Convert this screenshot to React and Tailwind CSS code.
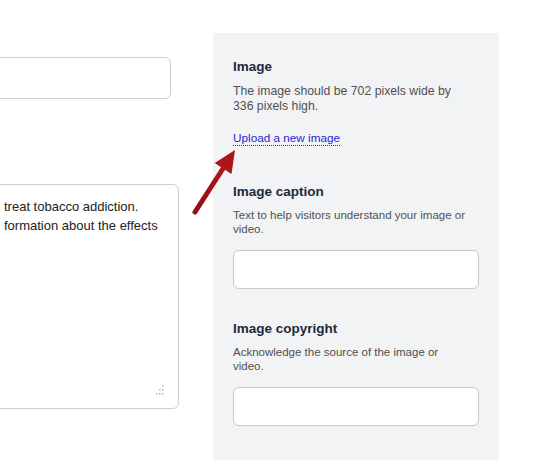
import React from 'react'

const font = { fontFamily: '"Liberation Sans", Arial, sans-serif' }

function Field({ title, help, className = '' }) {
  return (
    <div className={className}>
      <h3 className="text-[13.5px] leading-[16px] font-bold text-[#1c2a3a]">{title}</h3>
      <p className="mt-[8px] text-[11.5px] leading-[14px] text-[#505050] whitespace-nowrap">{help}</p>
      <input
        type="text"
        className="mt-[14px] block w-[246px] h-[39px] bg-white border border-[#c8c8c8] rounded-[6px] outline-none"
      />
    </div>
  )
}

function ResizeGrip() {
  return (
    <svg width="12" height="12" viewBox="0 0 12 12" className="absolute right-[13px] bottom-[12px]">
      {[[9, 1], [6, 5], [9, 5], [3, 9], [6, 9], [9, 9]].map(([x, y], i) => (
        <rect key={i} x={x} y={y} width="1.5" height="1.5" fill="#b8b8b8" />
      ))}
    </svg>
  )
}

export default function App() {
  return (
    <div className="relative w-[560px] h-[460px] overflow-hidden bg-white flex" style={font}>
      {/* Main column (cropped on the left) */}
      <div className="w-[213px] shrink-0">
        <input
          type="text"
          className="block mt-[57px] -ml-[10px] w-[181px] h-[42px] bg-white border border-[#cfcfcf] rounded-[6px] outline-none"
        />
        <div className="relative mt-[85px] -ml-[10px] w-[189px] h-[225px] bg-white border border-[#cfcfcf] rounded-[6px]">
          <div className="pt-[12px] pl-[13px] text-[13px] leading-[19px] text-[#222] whitespace-nowrap">
            <div>treat tobacco addiction.</div>
            <div>formation about the effects</div>
          </div>
          <ResizeGrip />
        </div>
      </div>

      {/* Sidebar */}
      <div className="mt-[33px] w-[286px] shrink-0 bg-[#f2f3f5] px-5 pt-[26px]">
        <h3 className="text-[13.5px] leading-[16px] font-bold text-[#1c2a3a]">Image</h3>
        <p className="mt-[9px] text-[12.25px] leading-[15px] text-[#505050] whitespace-nowrap">
          The image should be 702 pixels wide by
          <br />
          336 pixels high.
        </p>
        <a
          href="#"
          className="inline-block mt-[17px] text-[11.75px] leading-[14px] text-[#2828d8] border-b border-dotted border-[#2828d8]"
        >
          Upload a new image
        </a>
        <Field
          className="mt-[35px]"
          title="Image caption"
          help={<>Text to help visitors understand your image or<br />video.</>}
        />
        <Field
          className="mt-[32px]"
          title="Image copyright"
          help={<>Acknowledge the source of the image or<br />video.</>}
        />
      </div>

      {/* Callout arrow */}
      <svg className="absolute left-0 top-0 pointer-events-none" width="560" height="460">
        <defs>
          <linearGradient id="arr" x1="0" y1="1" x2="1" y2="0">
            <stop offset="0" stopColor="#8e0f14" />
            <stop offset="1" stopColor="#b3161c" />
          </linearGradient>
        </defs>
        <line x1="195" y1="212" x2="224" y2="167" stroke="url(#arr)" strokeWidth="5" strokeLinecap="round" />
        <polygon points="235,150 231.5,174 214.7,163" fill="#ac151b" />
      </svg>
    </div>
  )
}
